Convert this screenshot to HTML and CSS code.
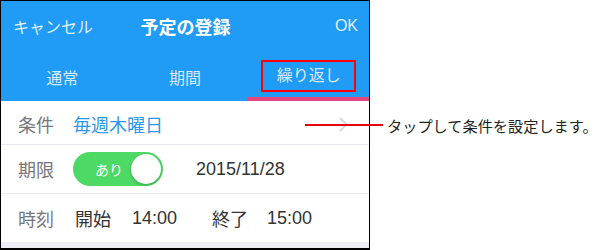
FILE: index.html
```html
<!DOCTYPE html>
<html lang="ja">
<head>
<meta charset="utf-8">
<title>予定の登録</title>
<link rel="stylesheet" href="styles.css">
</head>
<body>
<div class="page">
  <div class="phone">
    <header class="nav">
      <div class="topbar">
        <span class="cancel">キャンセル</span>
        <span class="title">予定の登録</span>
        <span class="ok">OK</span>
      </div>
      <div class="tabs">
        <div class="tab">通常</div>
        <div class="tab">期間</div>
        <div class="tab active"><span class="mark">繰り返し</span></div>
      </div>
    </header>
    <div class="rows">
      <div class="row row-first">
        <span class="label">条件</span>
        <span class="value link">毎週木曜日</span>
        <svg class="chevron" width="9" height="15" viewBox="0 0 9 15"><path d="M1.5 1.5 L7.5 7.5 L1.5 13.5" fill="none" stroke="#d3dbe6" stroke-width="2" stroke-linecap="round" stroke-linejoin="round"/></svg>
      </div>
      <div class="row">
        <span class="label">期限</span>
        <span class="toggle"><span class="toggle-text">あり</span><span class="knob"></span></span>
        <span class="date">2015/11/28</span>
      </div>
      <div class="row row-last">
        <span class="label">時刻</span>
        <span class="value">開始</span>
        <span class="time">14:00</span>
        <span class="value end">終了</span>
        <span class="time">15:00</span>
      </div>
    </div>
    <div class="footer"></div>
  </div>
  <div class="note">
    <span class="note-line"></span>
    <span class="note-text">タップして条件を設定します。</span>
  </div>
</div>
</body>
</html>
```

FILE: styles.css
```css
* { box-sizing: border-box; }

html, body {
  margin: 0;
  padding: 0;
  background: #ffffff;
}

body {
  font-family: "Liberation Sans", "Noto Sans CJK JP", sans-serif;
  width: 600px;
  height: 250px;
  overflow: hidden;
}

.page {
  position: relative;
  display: flex;
  width: 600px;
  height: 250px;
}

.phone {
  width: 370px;
  height: 250px;
  border: 1px solid #000;
  border-bottom-width: 2px;
  display: flex;
  flex-direction: column;
  background: #fff;
}

.nav {
  background: #209bf6;
  height: 100px;
  display: flex;
  flex-direction: column;
}

.topbar {
  height: 50px;
  display: grid;
  grid-template-columns: 1fr auto 1fr;
  align-items: center;
  padding: 0 11px 0 12px;
}

.cancel {
  font-size: 16px;
  color: rgba(255, 255, 255, 0.88);
}

.title {
  font-size: 18px;
  font-weight: bold;
  color: #fff;
}

.ok {
  justify-self: end;
  font-size: 16px;
  color: rgba(255, 255, 255, 0.88);
}

.tabs {
  height: 50px;
  display: grid;
  grid-template-columns: 1fr 1fr 1fr;
}

.tab {
  display: flex;
  align-items: center;
  justify-content: center;
  font-size: 16px;
  color: rgba(255, 255, 255, 0.82);
  padding-top: 1px;
}

.tab.active {
  border-bottom: 4px solid #e8457f;
  padding-top: 4px;
  margin-left: 1px;
}

.mark {
  display: inline-block;
  border: 2px solid #ff0000;
  line-height: 28px;
  padding: 0 13px 0 14px;
}

.rows {
  display: flex;
  flex-direction: column;
}

.row {
  display: flex;
  align-items: center;
  height: 49px;
  border-bottom: 1px solid #e6e9ef;
  padding-left: 17px;
  font-size: 18px;
  color: #333;
}

.row-first {
  height: 44px;
  padding-top: 3px;
}

.row-last {
  height: 48px;
  border-bottom: none;
}

.label {
  width: 36px;
  margin-right: 19px;
  color: #76767b;
}

.value.link {
  color: #2b98ee;
}

.chevron {
  margin-left: auto;
  margin-right: 21px;
}

.toggle {
  position: relative;
  display: flex;
  align-items: center;
  width: 90px;
  height: 34px;
  border-radius: 17px;
  background: #4cd964;
  padding: 2px;
}

.toggle-text {
  font-size: 14px;
  color: #fff;
  margin-left: 20px;
}

.knob {
  margin-left: auto;
  width: 30px;
  height: 30px;
  border-radius: 50%;
  background: #fff;
  box-shadow: 0 1px 3px rgba(0, 0, 0, 0.25);
}

.date {
  margin-left: 33px;
}

.row-last .value {
  margin-left: 2px;
}

.time {
  margin-left: 21px;
}

.row-last .end {
  margin-left: 35px;
}

.row-last .end + .time {
  margin-left: 19px;
}

.footer {
  flex: 1;
  background: #eeeff4;
}

.note {
  position: absolute;
  left: 305px;
  top: 114px;
  display: flex;
  align-items: center;
  height: 22px;
}

.note-line {
  width: 78px;
  height: 2px;
  background: #e60012;
}

.note-text {
  margin-left: 4px;
  font-family: "Noto Sans CJK JP", sans-serif;
  font-size: 15.2px;
  color: #222;
  white-space: nowrap;
}
```
